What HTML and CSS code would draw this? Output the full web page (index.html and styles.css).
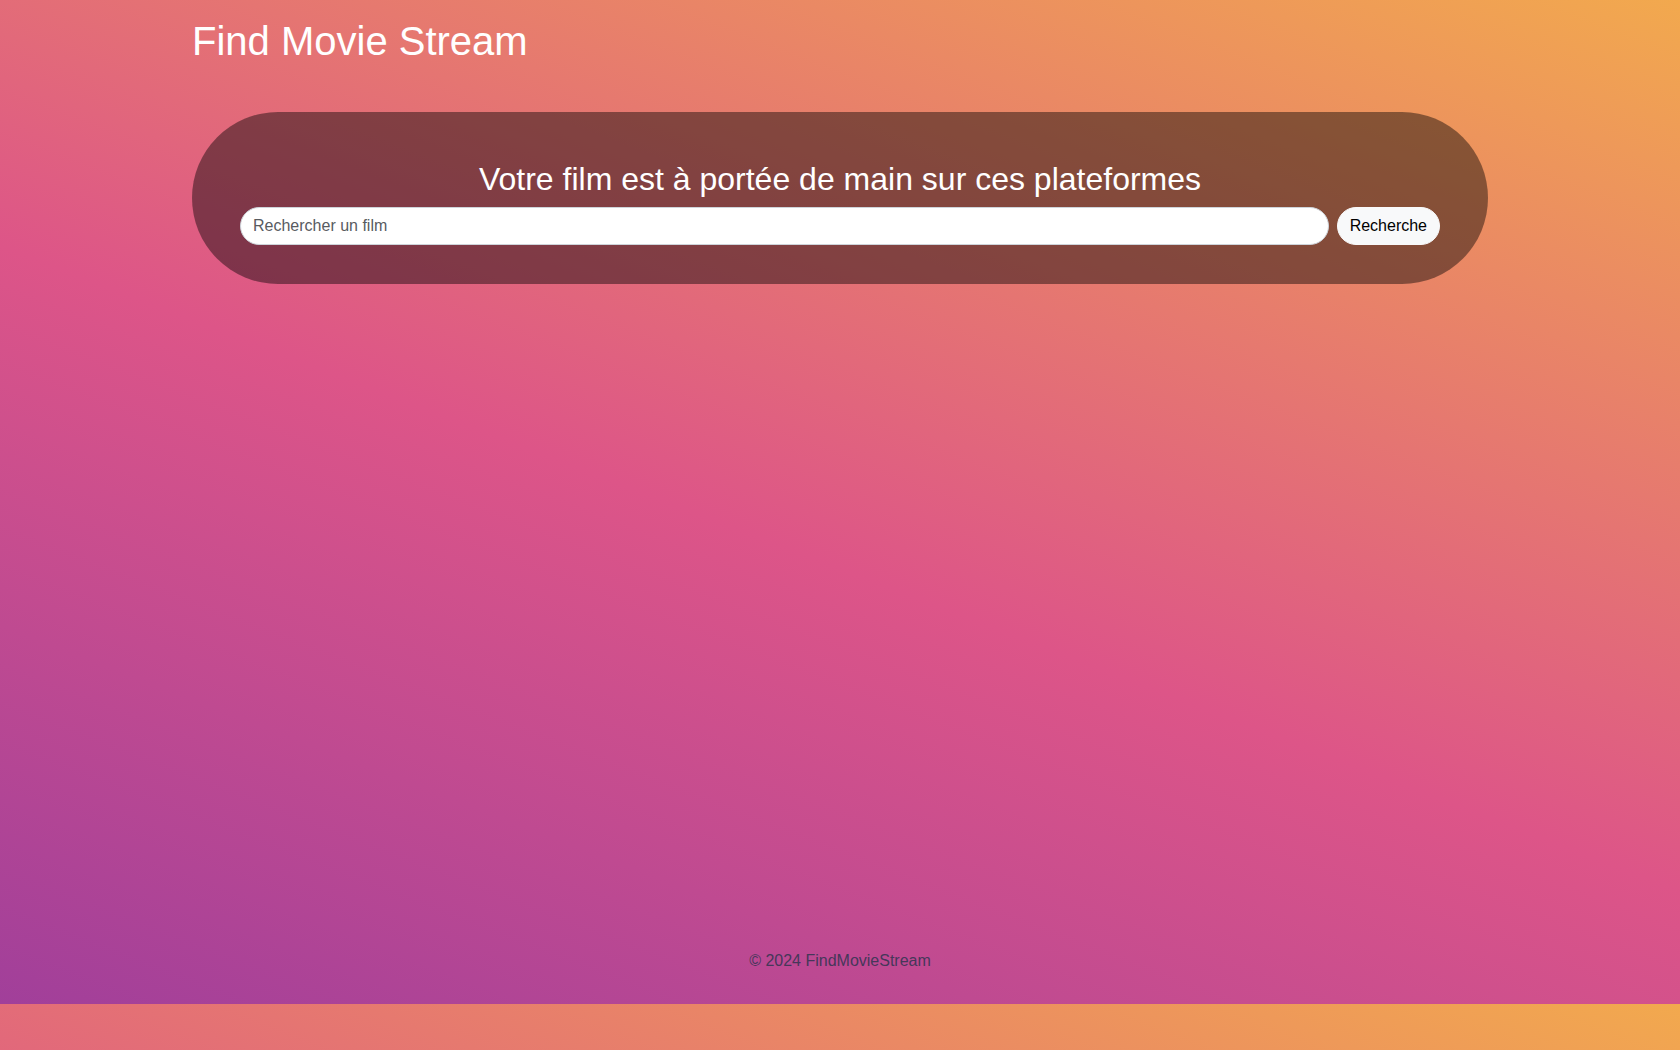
FILE: index.html
```html
<!DOCTYPE html>
<html lang="fr">
<head>
<meta charset="utf-8">
<title>Find Movie Stream</title>
<link rel="stylesheet" href="styles.css">
</head>
<body>
  <header class="site-header">
    <div class="container">
      <h1 class="brand">Find Movie Stream</h1>
    </div>
  </header>
  <main class="main">
    <div class="container">
      <section class="hero">
        <h2 class="hero-title">Votre film est à portée de main sur ces plateformes</h2>
        <form class="search" onsubmit="return false;">
          <input class="search-input" type="text" placeholder="Rechercher un film">
          <button class="search-btn" type="submit">Recherche</button>
        </form>
      </section>
    </div>
  </main>
  <footer class="site-footer">
    <p class="copy">© 2024 FindMovieStream</p>
  </footer>
</body>
</html>
```

FILE: styles.css
```css
* { box-sizing: border-box; }

body {
  margin: 0;
  font-family: "Liberation Sans", Arial, sans-serif;
  font-size: 16px;
  line-height: 1.5;
  color: #212529;
  background: linear-gradient(21deg, #a13f9a 0%, #dd5588 46%, #f2a94e 100%);
}

.container {
  width: 1320px;
  margin: 0 auto;
  padding: 0 12px;
}

.site-header {
  padding-top: 17px;
}

.brand {
  margin: 0;
  font-size: 40px;
  font-weight: 400;
  line-height: 1.2;
  color: #fff;
}

.main {
  min-height: 868px;
  padding-top: 47px;
}

.hero {
  background: rgba(0, 0, 0, 0.43);
  border-radius: 90px;
  padding: 48px 48px 39px;
  display: flex;
  flex-direction: column;
  align-items: stretch;
}

.hero-title {
  margin: 0 0 9px;
  font-size: 32px;
  font-weight: 400;
  line-height: 1.2;
  color: #fff;
  text-align: center;
}

.search {
  display: flex;
  gap: 8px;
}

.search-input {
  flex: 1;
  height: 38px;
  padding: 6px 12px;
  font-family: inherit;
  font-size: 16px;
  color: #212529;
  background: #fff;
  border: 1px solid #ced4da;
  border-radius: 19px;
  outline: none;
}

.search-input::placeholder {
  color: #585b5f;
  opacity: 1;
}

.search-btn {
  height: 38px;
  padding: 6px 12px;
  font-family: inherit;
  font-size: 16px;
  color: #000;
  background: #f8f9fa;
  border: 1px solid #f8f9fa;
  border-radius: 19px;
  cursor: pointer;
}

.site-footer {
  padding: 16px 0 31px;
  text-align: center;
}

.copy {
  margin: 0;
  color: #46375a;
}
```
